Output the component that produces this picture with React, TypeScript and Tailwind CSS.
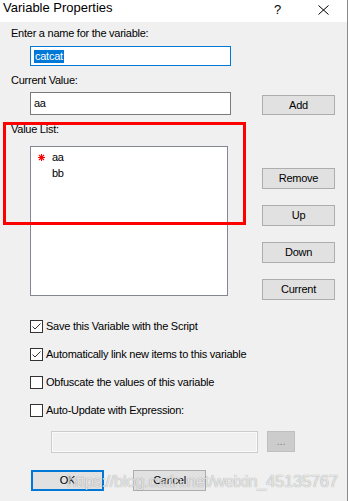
import { useState } from "react";

function WinButton({ label, focused = false }: { label: string; focused?: boolean }) {
  return (
    <button
      className={
        focused
          ? "flex h-[21px] w-[73px] items-center justify-center border-2 border-[#0078d7] bg-[#e1e1e1] text-black"
          : "flex h-[21px] w-[73px] items-center justify-center border border-[#adadad] bg-[#e1e1e1] text-black"
      }
    >
      {label}
    </button>
  );
}

function CheckRow({ label, checked }: { label: string; checked: boolean }) {
  return (
    <div className="mb-[15px] flex h-[13px] items-center">
      <span className="flex h-[13px] w-[13px] items-center justify-center border border-[#333333] bg-white">
        {checked && (
          <svg width="11" height="11" viewBox="0 0 11 11">
            <path d="M1.5 5.5 L4 8 L9.5 2.5" fill="none" stroke="#333333" strokeWidth="1" />
          </svg>
        )}
      </span>
      <span className="ml-[3px] -mt-px">{label}</span>
    </div>
  );
}

export default function App() {
  const [name, setName] = useState("catcat");
  const values = ["aa", "bb"];

  return (
    <div className="relative h-[501px] w-[348px] overflow-hidden border-r border-[#8a8a8a] bg-[#f0f0f0] font-['Liberation_Sans',Arial,sans-serif] text-[11px] leading-[13px] tracking-[-0.25px] text-black">
      {/* title bar */}
      <div className="flex h-[22px] items-start bg-white">
        <span className="pl-[3px] text-[13px] leading-[15px] tracking-normal">Variable Properties</span>
        <span className="ml-auto mt-[2px] text-[13px] leading-[15px]">?</span>
        <svg className="ml-[37px] mr-[18px] mt-[5px]" width="11" height="10" viewBox="0 0 11 10">
          <path d="M0.5 0.5 L10.5 9.5 M10.5 0.5 L0.5 9.5" stroke="#000" strokeWidth="1" />
        </svg>
      </div>

      <div className="px-[11px]">
        <div className="mt-[5px]">Enter a name for the variable:</div>
        <div className="ml-[19px] mt-[6px] flex h-[20px] w-[201px] items-center border border-[#0078d7] bg-white px-[3px]">
          <span className="bg-[#0078d7] px-px text-white" onClick={() => setName(name)}>
            {name}
          </span>
        </div>

        <div className="mt-[8px]">Current Value:</div>
        <div className="mt-[5px] flex items-end">
          <div className="ml-[19px] flex h-[23px] w-[201px] items-center border border-[#7a7a7a] bg-white px-[3px]">
            aa
          </div>
          <div className="ml-[31px]">
            <div className="flex h-[20px] w-[73px] items-center justify-center border border-[#adadad] bg-[#e1e1e1]">
              Add
            </div>
          </div>
        </div>

        <div className="mt-[8px]">Value List:</div>
        <div className="mt-[10px] flex h-[150px] items-start">
          <div className="ml-[19px] h-[150px] w-[198px] border border-[#828790] bg-white pt-[2px] leading-[16px]">
            {values.map((v, i) => (
              <div key={v} className="flex items-center">
                <span className="flex w-[21px] justify-end pr-[7px]">
                  {i === 0 && (
                    <svg width="7" height="7" viewBox="0 0 7 7">
                      <path
                        d="M3.5 0 V7 M0 3.5 H7 M1 1 L6 6 M6 1 L1 6"
                        stroke="#ff0000"
                        strokeWidth="1.1"
                      />
                    </svg>
                  )}
                </span>
                <span>{v}</span>
              </div>
            ))}
          </div>
          <div className="ml-[34px] flex flex-col gap-[16px] pt-[22px]">
            <WinButton label="Remove" />
            <WinButton label="Up" />
            <WinButton label="Down" />
            <WinButton label="Current" />
          </div>
        </div>

        <div className="ml-[19px] mt-[24px]">
          <CheckRow label="Save this Variable with the Script" checked />
          <CheckRow label="Automatically link new items to this variable" checked />
          <CheckRow label="Obfuscate the values of this variable" checked={false} />
          <CheckRow label="Auto-Update with Expression:" checked={false} />
        </div>

        <div className="ml-[40px] mt-[-1px] flex items-start">
          <div className="h-[22px] w-[207px] border border-[#cccccc] bg-[#f0f0f0] shadow-[inset_0_0_0_1px_#fafafa]" />
          <div className="ml-[9px] flex h-[21px] w-[28px] items-center justify-center border border-[#bfbfbf] bg-[#cccccc] text-[#838383]">
            ...
          </div>
        </div>

        <div className="ml-[20px] mt-[17px] flex gap-[29px]">
          <WinButton label="OK" focused />
          <WinButton label="Cancel" />
        </div>
      </div>

      {/* red annotation box */}
      <div className="pointer-events-none absolute left-[3px] top-[122px] h-[103px] w-[243px] border-[3px] border-[#ff0000]" />

      {/* watermark */}
      <div className="pointer-events-none absolute left-[67px] top-[472px] font-['Liberation_Sans',Arial,sans-serif] text-[17px] leading-[20px] tracking-[-0.5px] text-white/75 [text-shadow:0_0_1px_rgba(0,0,0,0.45)]">
        https://blog.csdn.net/weixin_45135767
      </div>
    </div>
  );
}
